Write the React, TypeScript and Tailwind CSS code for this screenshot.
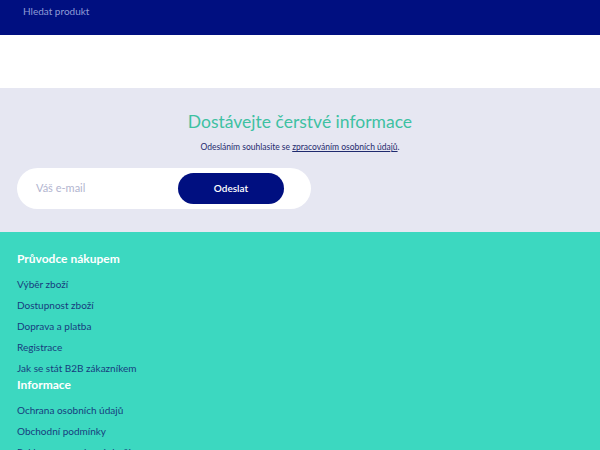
import React from "react";

export default function App() {
  const font = { fontFamily: "Lato, 'Noto Sans', sans-serif" };
  return (
    <div className="w-[600px] h-[450px] overflow-hidden" style={font}>
      <div className="h-[35px] bg-[#000f80] flex items-start pl-[23px] pt-[4px]">
        <span className="text-[10px] text-[#8f9bd6] leading-[14px]">Hledat produkt</span>
      </div>
      <div className="h-[53px] bg-white" />
      <div className="h-[144px] bg-[#e6e7f2] flex flex-col items-center pt-[22px]">
        <h2 className="text-[17.5px] leading-[24px] text-[#3ec1a2]">Dostávejte čerstvé informace</h2>
        <p className="mt-[8px] text-[8.5px] leading-[10px] text-[#1f2a6e]">
          Odesláním souhlasite se <span className="underline">zpracováním osobních údajů</span>.
        </p>
        <div className="self-start ml-[17px] mt-[16px] w-[294px] h-[41px] bg-white rounded-full flex items-center justify-between pl-[19px] pr-[27px]">
          <span className="text-[11px] text-[#b2b5cf]">Váš e-mail</span>
          <button className="w-[106px] h-[31px] rounded-full bg-[#000f80] text-white text-[10px] font-semibold">Odeslat</button>
        </div>
      </div>
      <div className="bg-[#3cd8c0] pl-[17px] pt-[19px]">
        <h3 className="text-[12px] font-bold text-white leading-[16px]">Průvodce nákupem</h3>
        <ul className="mt-[10px] flex flex-col gap-[7px] text-[10px] text-[#173c7e] leading-[14px]">
          <li>Výběr zboží</li>
          <li>Dostupnost zboží</li>
          <li>Doprava a platba</li>
          <li>Registrace</li>
          <li>Jak se stát B2B zákazníkem</li>
        </ul>
        <h3 className="mt-[2px] text-[12px] font-bold text-white leading-[16px]">Informace</h3>
        <ul className="mt-[10px] flex flex-col gap-[7px] text-[10px] text-[#173c7e] leading-[14px]">
          <li>Ochrana osobních údajů</li>
          <li>Obchodní podmínky</li>
          <li>Reklamace a vrácení zboží</li>
        </ul>
      </div>
    </div>
  );
}
